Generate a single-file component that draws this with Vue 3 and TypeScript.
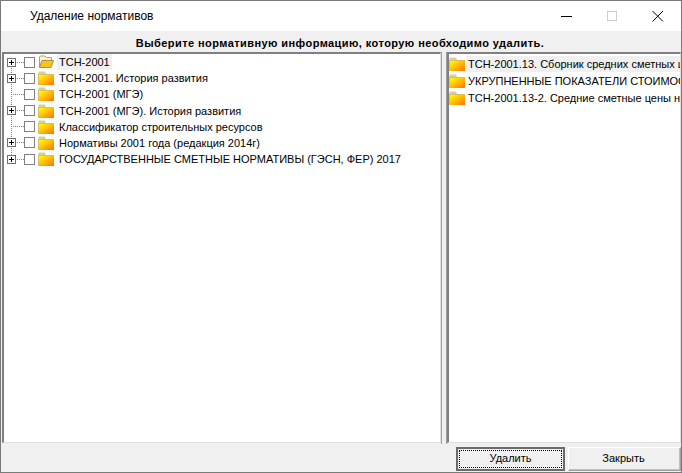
<script setup lang="ts">
interface Node { label: string; expand: boolean; open?: boolean }
const nodes: Node[] = [
  { label: 'ТСН-2001', expand: true, open: true },
  { label: 'ТСН-2001. История развития', expand: true },
  { label: 'ТСН-2001 (МГЭ)', expand: false },
  { label: 'ТСН-2001 (МГЭ). История развития', expand: true },
  { label: 'Классификатор строительных ресурсов', expand: false },
  { label: 'Нормативы 2001 года (редакция 2014г)', expand: true },
  { label: 'ГОСУДАРСТВЕННЫЕ СМЕТНЫЕ НОРМАТИВЫ (ГЭСН, ФЕР) 2017', expand: true },
]
const files: string[] = [
  'ТСН-2001.13. Сборник средних сметных цен на материалы',
  'УКРУПНЕННЫЕ ПОКАЗАТЕЛИ СТОИМОСТИ СТРОИТЕЛЬСТВА',
  'ТСН-2001.13-2. Средние сметные цены на материалы',
]
</script>

<template>
  <div class="window">
    <header class="titlebar">
      <span class="title">Удаление нормативов</span>
      <div class="controls">
        <svg class="ctl" width="46" height="30" viewBox="0 0 46 30"><path d="M18 15.5h11" stroke="#000" fill="none" /></svg>
        <svg class="ctl" width="46" height="30" viewBox="0 0 46 30"><rect x="18.500" y="10.500" width="9" height="9" stroke="#cccccc" fill="none" /></svg>
        <svg class="ctl" width="46" height="30" viewBox="0 0 46 30"><path d="M17.500 10l10.500 10.500M28 10L17.500 20.500" stroke="#000" fill="none" /></svg>
      </div>
    </header>
    <div class="prompt">Выберите нормативную информацию, которую необходимо удалить.</div>
    <main class="panes">
      <section class="pane left">
        <div class="tree-line"></div>
        <div v-for="(n, i) in nodes" :key="i" class="row">
          <span class="connector">
            <span v-if="n.expand" class="plus"></span>
          </span>
          <span class="check"></span>
          <svg v-if="n.open" class="folder" width="16" height="14" viewBox="0 0 16 14">
            <path d="M1.500 12.500V2l1-1h4.500l1.500 1.500h5v3" fill="#fff6c8" stroke="#b0a070" />
            <path d="M1.500 12.500l2.500-7h11.500l-2.500 7z" fill="#ffc21a" stroke="#a89050" />
          </svg>
          <svg v-else class="folder" width="16" height="14" viewBox="0 0 16 14">
            <defs>
              <linearGradient :id="'g' + i" x1="0" y1="0" x2="1" y2="1">
                <stop offset="0.1" stop-color="#ffff00" /><stop offset="1" stop-color="#ff7000" />
              </linearGradient>
            </defs>
            <path d="M0 3l1-2.500h6l1 2.500z" fill="#d8cf9a" />
            <rect x="0" y="3" width="16" height="11" :fill="`url(#g${i})`" />
            <path d="M0.500 14V3.500H16" fill="none" stroke="#d8c060" />
          </svg>
          <span class="label" :class="{ selected: i === 0 }">{{ n.label }}</span>
        </div>
      </section>
      <div class="splitter"></div>
      <section class="pane right">
        <div v-for="(f, i) in files" :key="i" class="frow" :class="{ hl: i === 0 }">
          <svg class="folder" width="16" height="14" viewBox="0 0 16 14">
            <defs>
              <linearGradient :id="'f' + i" x1="0" y1="0" x2="1" y2="1">
                <stop offset="0.1" stop-color="#ffff00" /><stop offset="1" stop-color="#ff7000" />
              </linearGradient>
            </defs>
            <path d="M0 3l1-2.500h6l1 2.500z" fill="#d8cf9a" />
            <rect x="0" y="3" width="16" height="11" :fill="`url(#f${i})`" />
            <path d="M0.500 14V3.500H16" fill="none" stroke="#d8c060" />
          </svg>
          <span class="flabel">{{ f }}</span>
        </div>
      </section>
    </main>
    <footer class="actions">
      <button class="btn primary" type="button"><span class="focus">Удалить</span></button>
      <button class="btn secondary" type="button"><span class="focus none">Закрыть</span></button>
    </footer>
  </div>
</template>

<style>
html, body { margin: 0; padding: 0; }
</style>

<style scoped>
.window {
  width: 682px;
  height: 473px;
  box-sizing: border-box;
  border: 1px solid #7a7a7a;
  background: #f0f0f0;
  display: flex;
  flex-direction: column;
  font-family: "Liberation Sans", sans-serif;
  font-size: 11px;
  color: #000;
  overflow: hidden;
}
.titlebar {
  height: 30px;
  background: #fff;
  display: flex;
  align-items: center;
  justify-content: space-between;
  flex: none;
}
.title { margin-left: 29px; font-size: 12px; }
.controls { display: flex; }
.ctl { display: block; }
.prompt {
  height: 21px;
  line-height: 25px;
  padding-right: 2px;
  text-align: center;
  font-weight: 700;
  font-size: 11px;
  letter-spacing: 0.43px;
  flex: none;
}
.panes { height: 391px; flex: none; display: flex; padding-left: 1px; }
.pane {
  box-sizing: border-box;
  background: #fff;
  border-top: 2px solid #808080;
  border-left: 2px solid #808080;
  border-right: 1px solid #e0e0e0;
  border-bottom: 1px solid #e0e0e0;
  overflow: hidden;
  position: relative;
}
.left { width: 439px; }
.right { flex: 1; padding-top: 1px; }
.splitter {
  width: 6px;
  flex: none;
  margin-bottom: -1px;
  background: #f0f0f0;
  border-left: 1px solid #a0a0a0;
  border-right: 1px solid #a0a0a0;
  box-sizing: border-box;
}
.tree-line {
  position: absolute;
  left: 7px;
  top: 8px;
  height: 97px;
  border-left: 1px dotted #808080;
}
.row { height: 16.17px; display: flex; align-items: center; position: relative; }
.connector {
  width: 13px;
  height: 1px;
  margin-left: 7px;
  box-sizing: border-box;
  border-top: 1px dotted #808080;
  position: relative;
  flex: none;
}
.plus {
  position: absolute;
  left: -4px;
  top: -5px;
  width: 9px;
  height: 9px;
  box-sizing: border-box;
  border: 1px solid #707070;
  background:
    linear-gradient(#000, #000) center / 5px 1px no-repeat,
    linear-gradient(#000, #000) center / 1px 5px no-repeat,
    #fff;
}
.check {
  width: 11px;
  height: 11px;
  box-sizing: border-box;
  border: 1px solid #808080;
  background: #fff;
  flex: none;
  margin-right: 3px;
}
.folder { flex: none; display: block; }
.label { margin-left: 3px; padding: 0 2px; line-height: 16px; white-space: nowrap; }
.label.selected { background: #f0f0f0; }
.frow { height: 17px; display: flex; align-items: center; white-space: nowrap; }
.frow.hl .flabel { background: #f0f0f0; }
.flabel { margin-left: 1px; padding: 0 1px 0 2px; line-height: 16px; flex: 1; overflow: hidden; }
.actions {
  flex: none;
  display: flex;
  justify-content: flex-end;
  padding-top: 4px;
  gap: 3px;
}
.btn {
  height: 24px;
  padding: 2px;
  box-sizing: border-box;
  background: #f0f0f0;
  border: 1px solid #a0a0a0;
  border-top-color: #fff;
  border-left-color: #fff;
  box-shadow: inset -1px -1px 0 #c0c0c0;
  font: 11px "Liberation Sans", sans-serif;
  color: #000;
}
.btn.primary {
  width: 109px;
  border: 2px solid #6a6a6a;
  box-shadow: none;
  padding: 1px;
}
.btn.secondary { width: 113px; padding-right: 4px; }
.focus {
  display: block;
  height: 100%;
  line-height: 15px;
  box-sizing: border-box;
  border: 1px dotted #000;
}
.focus.none { border-color: transparent; }
</style>
